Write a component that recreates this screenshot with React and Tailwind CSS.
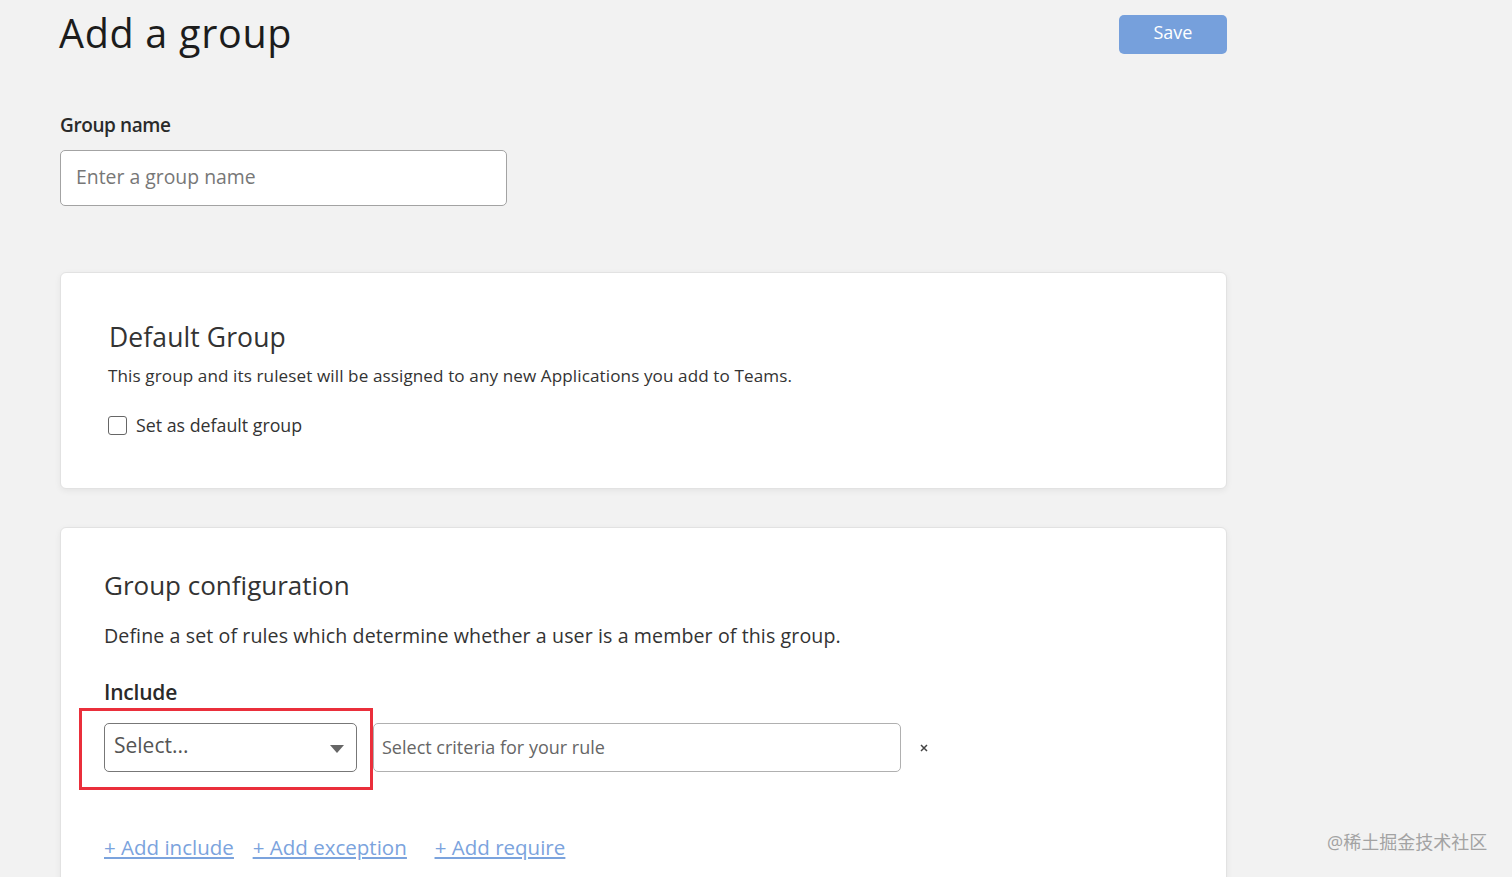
import React from "react";

export default function App() {
  return (
    <div className="relative h-[877px] w-[1512px] overflow-hidden bg-[#f2f2f2] font-['Open_Sans','Noto_Sans_CJK_SC',sans-serif] text-[#222]">
      <div className="ml-[60px] w-[1167px]">
        {/* header */}
        <div className="flex h-[68px] items-start justify-between">
          <h1 className="-ml-[1px] mt-[10px] text-[39.5px] leading-[46px] tracking-[0.7px] text-[#1c1c1c]">Add a group</h1>
          <button className="mt-[15px] h-[39px] w-[108px] rounded-[5px] bg-[#76a0dc] pb-[4px] text-[18px] text-white">Save</button>
        </div>

        {/* group name */}
        <label className="mt-[45px] block text-[19px] leading-[24px] font-semibold tracking-[-0.4px] text-[#2a2a2a]">Group name</label>
        <div className="mt-[13px] flex h-[56px] w-[447px] items-center rounded-[5px] border border-[#a3a3a3] bg-white px-[15px] pb-[3px] text-[19.4px] text-[#777]">
          Enter a group name
        </div>

        {/* default group */}
        <section className="mt-[66px] h-[217px] rounded-[6px] border border-[#e2e2e2] bg-white pt-[47px] pl-[47px] shadow-[0_2px_6px_rgba(0,0,0,0.06)]">
          <h2 className="ml-[1px] text-[26.5px] leading-[34px] font-medium tracking-[0.1px] text-[#333]">Default Group</h2>
          <p className="mt-[9px] text-[17.1px] leading-[26px] tracking-[0.1px] text-[#333]">
            This group and its ruleset will be assigned to any new Applications you add to Teams.
          </p>
          <label className="mt-[23px] flex items-center gap-[9px] text-[17.8px] leading-[26px] text-[#333]">
            <span className="h-[19px] w-[19px] rounded-[3px] border border-[#666] bg-white" />
            Set as default group
          </label>
        </section>

        {/* group configuration */}
        <section className="mt-[38px] h-[400px] rounded-[6px] border border-[#e2e2e2] bg-white pt-[40px] pl-[43px] shadow-[0_2px_6px_rgba(0,0,0,0.06)]">
          <h2 className="text-[26px] leading-[34px] font-medium text-[#333]">Group configuration</h2>
          <p className="mt-[19px] text-[19.6px] leading-[30px] tracking-[0.1px] text-[#333]">
            Define a set of rules which determine whether a user is a member of this group.
          </p>
          <label className="mt-[27px] block text-[21px] leading-[28px] font-semibold tracking-[-0.2px] text-[#2a2a2a]">Include</label>

          <div className="mt-[17px] flex items-center">
            <div className="relative flex h-[49px] w-[253px] items-center justify-between rounded-[5px] border border-[#777] bg-white pr-[12px] pb-[3px] pl-[9px] text-[21px] text-[#555]">
              Select...
              <svg width="14" height="8" viewBox="0 0 14 8" className="mt-[5px]">
                <path d="M0 0h14L7 8z" fill="#666" />
              </svg>
              {/* red highlight drawn over the select */}
              <div className="absolute -top-[16px] -left-[26px] h-[82px] w-[294px] border-[3px] border-[#ea2f3b]" />
            </div>
            <div className="ml-[16px] flex h-[49px] w-[528px] items-center rounded-[5px] border border-[#b0b0b0] bg-white pb-[1px] pl-[8px] text-[18px] text-[#666]">
              Select criteria for your rule
            </div>
            <svg width="8" height="8" viewBox="0 0 8 8" className="ml-[19px]">
              <path d="M1 1l6 6M7 1L1 7" stroke="#444" strokeWidth="1.5" />
            </svg>
          </div>

          <div className="mt-[61px] flex text-[20.5px] leading-[28px] text-[#7ba3dd] underline">
            <a>+ Add include</a>
            <a className="ml-[19px]">+ Add exception</a>
            <a className="ml-[28px]">+ Add require</a>
          </div>
        </section>
      </div>

      {/* watermark */}
      <div className="absolute top-[830px] left-[1327px] text-[18px] leading-[24px] text-[#a3a3a3]">@稀土掘金技术社区</div>
    </div>
  );
}
